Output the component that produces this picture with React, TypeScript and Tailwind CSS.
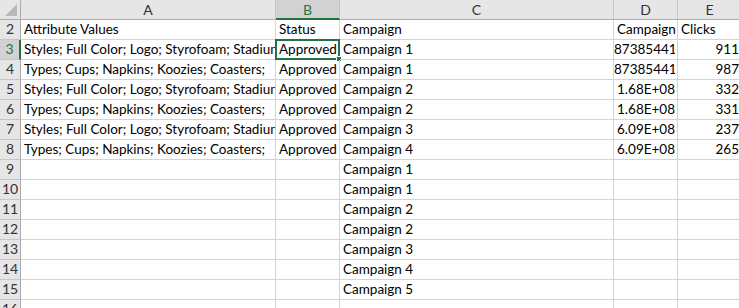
import React from "react";

// column widths include the 1px right gridline of each cell
const cols = [
    { key: "A", width: 255 },
    { key: "B", width: 64 },
    { key: "C", width: 274 },
    { key: "D", width: 64 },
    { key: "E", width: 64 },
];

type Row = { n: number; a?: string; b?: string; c?: string; d?: string; e?: string; dNum?: boolean };

const styles = "Styles; Full Color; Logo; Styrofoam; Stadium Cups";
const types = "Types; Cups; Napkins; Koozies; Coasters;";

const rows: Row[] = [
    { n: 2, a: "Attribute Values", b: "Status", c: "Campaign", d: "Campaign", e: "Clicks" },
    { n: 3, a: styles, b: "Approved", c: "Campaign 1", d: "87385441", e: "911", dNum: true },
    { n: 4, a: types, b: "Approved", c: "Campaign 1", d: "87385441", e: "987", dNum: true },
    { n: 5, a: styles, b: "Approved", c: "Campaign 2", d: "1.68E+08", e: "332", dNum: true },
    { n: 6, a: types, b: "Approved", c: "Campaign 2", d: "1.68E+08", e: "331", dNum: true },
    { n: 7, a: styles, b: "Approved", c: "Campaign 3", d: "6.09E+08", e: "237", dNum: true },
    { n: 8, a: types, b: "Approved", c: "Campaign 4", d: "6.09E+08", e: "265", dNum: true },
    { n: 9, c: "Campaign 1" },
    { n: 10, c: "Campaign 1" },
    { n: 11, c: "Campaign 2" },
    { n: 12, c: "Campaign 2" },
    { n: 13, c: "Campaign 3" },
    { n: 14, c: "Campaign 4" },
    { n: 15, c: "Campaign 5" },
    { n: 16 },
];

const SELECTED_COL = "B";
const SELECTED_ROW = 3;

function Cell({ width, children, right, selected }: { width: number; children?: React.ReactNode; right?: boolean; selected?: boolean }) {
    return (
        <div
            className={`relative h-5 shrink-0 border-r border-b border-[#d4d4d4] flex items-end pb-[1px] ${right ? "justify-end pr-[2px]" : "pl-[3px]"}`}
            style={{ width }}
        >
            <span className="whitespace-nowrap overflow-hidden leading-[18px] block">{children}</span>
            {selected && (
                <>
                    <div className="absolute -left-px -top-px -right-px -bottom-px border-2 border-[#217346] pointer-events-none" />
                    <div className="absolute -right-[3px] -bottom-[3px] w-[6px] h-[6px] bg-[#217346] border border-white pointer-events-none" />
                </>
            )}
        </div>
    );
}

export default function App() {
    return (
        <div
            className="w-[739px] h-[308px] overflow-hidden bg-white text-[13.5px] text-black"
            style={{ fontFamily: "Lato, 'Liberation Sans', sans-serif" }}
        >
            {/* column letters */}
            <div className="flex h-5">
                <div className="relative w-[21px] shrink-0 bg-[#e6e6e6] border-r border-b border-[#ababab]">
                    <svg className="absolute right-[3px] bottom-[3px]" width="12" height="12" viewBox="0 0 12 12">
                        <path d="M12 0 L12 12 L0 12 Z" fill="#b8b8b8" />
                    </svg>
                </div>
                {cols.map((col) => {
                    const active = col.key === SELECTED_COL;
                    return (
                        <div
                            key={col.key}
                            className={`shrink-0 flex items-center justify-center text-[14px] border-r border-[#c6c6c6] ${
                                active
                                    ? "bg-[#d2d2d2] text-[#217346] border-b-2 border-b-[#217346]"
                                    : "bg-[#e6e6e6] text-[#333] border-b border-b-[#ababab]"
                            }`}
                            style={{ width: col.width }}
                        >
                            {col.key}
                        </div>
                    );
                })}
            </div>

            {rows.map((row) => {
                const active = row.n === SELECTED_ROW;
                return (
                    <div key={row.n} className="flex h-5">
                        <div
                            className={`w-[21px] shrink-0 flex items-end pb-[1px] justify-center text-[14px] leading-[18px] border-b border-[#c6c6c6] ${
                                active
                                    ? "bg-[#d2d2d2] text-[#217346] border-r-2 border-r-[#217346]"
                                    : "bg-[#e6e6e6] text-[#333] border-r border-r-[#ababab]"
                            }`}
                        >
                            {row.n}
                        </div>
                        <Cell width={cols[0].width}>{row.a}</Cell>
                        <Cell width={cols[1].width} selected={active}>{row.b}</Cell>
                        <Cell width={cols[2].width}>{row.c}</Cell>
                        <Cell width={cols[3].width} right={row.dNum}>{row.d}</Cell>
                        <Cell width={cols[4].width} right={row.dNum}>{row.e}</Cell>
                    </div>
                );
            })}
        </div>
    );
}
